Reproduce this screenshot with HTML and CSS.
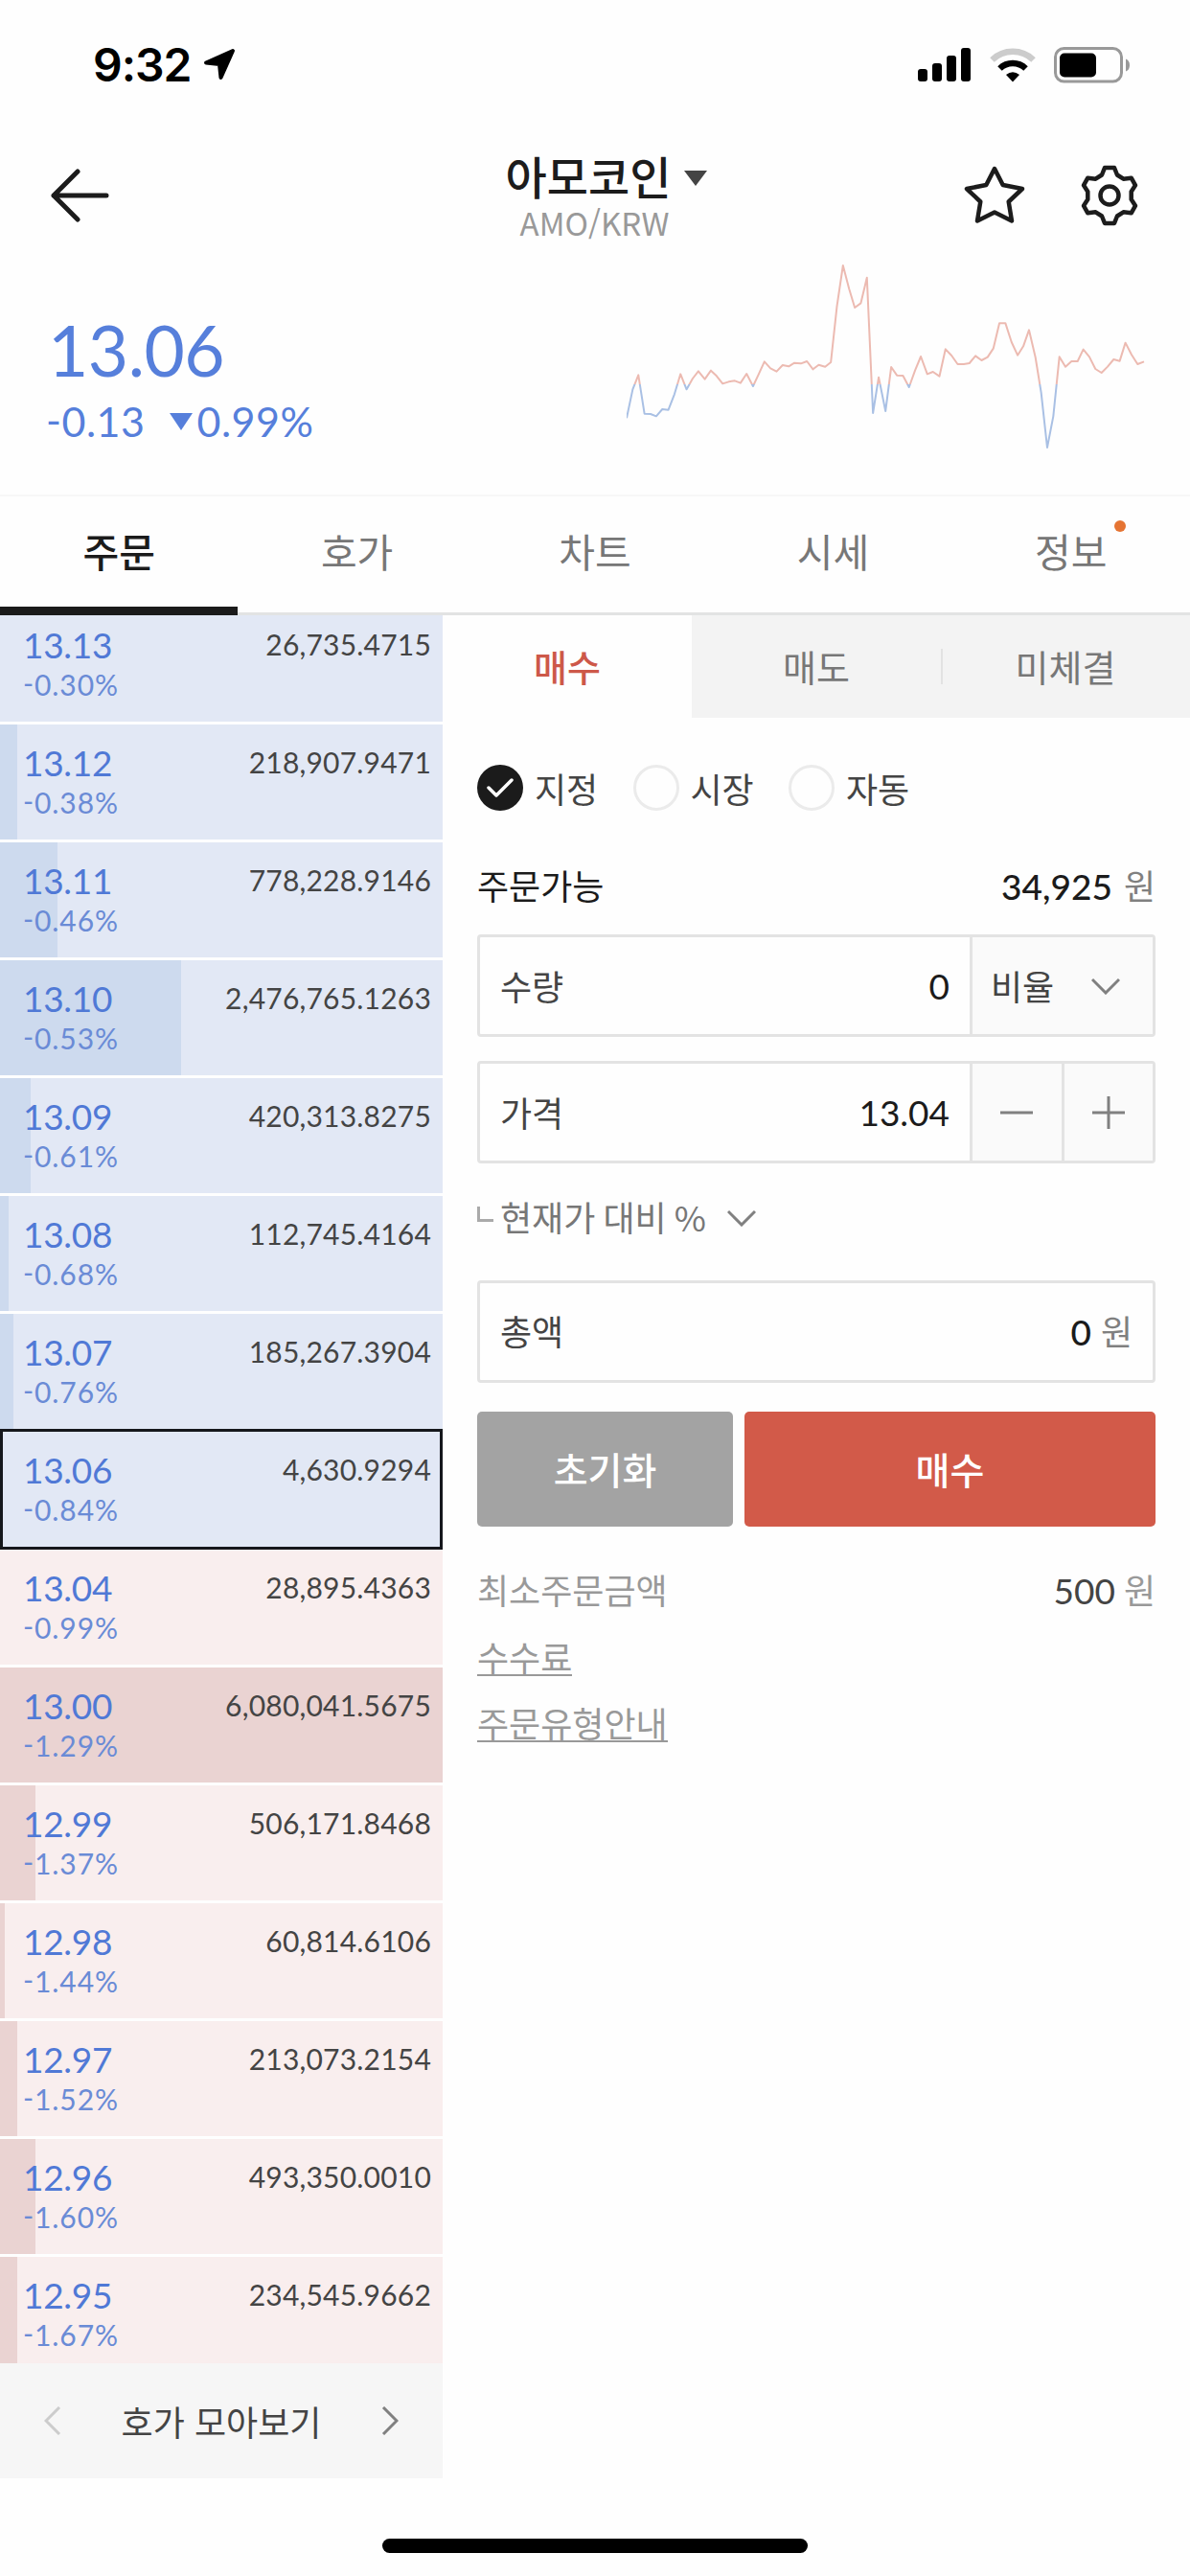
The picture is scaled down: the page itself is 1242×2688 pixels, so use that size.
FILE: index.html
```html
<!DOCTYPE html>
<html lang="ko">
<head>
<meta charset="utf-8">
<title>아모코인 AMO/KRW</title>
<link rel="stylesheet" href="styles.css">
</head>
<body>

<div class="statusbar">
	<span class="time">9:32</span>
	<svg class="location" width="34" height="34" viewBox="0 0 34 34"><path d="M31 3 3 15.500 17 17 18.500 31Z" fill="#000" stroke="#000" stroke-width="4" stroke-linejoin="round"/></svg>
	<svg class="signal" width="56" height="36" viewBox="0 0 56 36">
		<rect x="0" y="22" width="10" height="13" rx="3"/>
		<rect x="15" y="16" width="10" height="19" rx="3"/>
		<rect x="30" y="8" width="10" height="27" rx="3"/>
		<rect x="45" y="0" width="10" height="35" rx="3"/>
	</svg>
	<svg class="wifi" width="48" height="36" viewBox="0 0 48 36" fill="none">
		<path d="M2.500 12.500A31 31 0 0 1 45.500 12.500" stroke="#ccc" stroke-width="6.500"/>
		<path d="M10.500 21.500A19.500 19.500 0 0 1 37.500 21.500" stroke="#000" stroke-width="6.500"/>
		<path d="M24 35.500 17 28Q24 22.500 31 28Z" fill="#000"/>
	</svg>
	<svg class="battery" width="80" height="38" viewBox="0 0 80 38">
		<rect x="1.500" y="1.500" width="69" height="34.500" rx="9" fill="none" stroke="#999" stroke-width="3"/>
		<rect x="6" y="6.500" width="38" height="25" rx="5"/>
		<path d="M75 12.500Q79 14 79 19T75 25.500Z" fill="#999"/>
	</svg>
</div>

<div class="header">
	<svg class="back" width="62" height="56" viewBox="0 0 62 56" fill="none" stroke="#1c1c1c" stroke-width="5" stroke-linecap="round" stroke-linejoin="round"><path d="M58 28H3M28 3 3 28 28 53"/></svg>
	<div class="coin">
		<div class="coin_name">아모코인<span class="caret"></span></div>
		<div class="coin_pair">AMO/KRW</div>
	</div>
	<div class="tools">
		<svg width="64" height="62" viewBox="0 0 64 62" fill="none" stroke="#1c1c1c" stroke-width="4.500" stroke-linejoin="round"><path d="M32 4 40.700 21 61 25 46.700 38.500 50 58.500 32 49.500 14 58.500 17.300 38.500 3 25 23.300 21Z"/></svg>
		<svg width="60" height="64" viewBox="0 0 60 64" fill="none" stroke="#1c1c1c" stroke-width="4.500" stroke-linejoin="round"><path d="M25 3H35L38 10.500 44.500 14.700 52.700 13.700 57 21.300 52.700 28V36L57 42.700 52.700 50.300 44.500 49.300 38 53.500 35 61H25L22 53.500 15.500 49.300 7.300 50.300 3 42.700 7.300 36V28L3 21.300 7.300 13.700 15.500 14.700 22 10.500Z"/><circle cx="30" cy="32" r="9.500"/></svg>
	</div>
</div>

<div class="summary">
	<div class="now">
		<div class="now_price">13.06</div>
		<div class="now_diff">-0.13<span class="down"></span>0.99%</div>
	</div>
	<svg class="spark" width="542" height="200" viewBox="84 820 1368 600" preserveAspectRatio="none" fill="none">
		<defs>
			<linearGradient id="updown" gradientUnits="userSpaceOnUse" x1="0" y1="820" x2="0" y2="1420">
				<stop offset="0.640" stop-color="#ecbab1"/>
				<stop offset="0.640" stop-color="#a9c0e4"/>
			</linearGradient>
		</defs>
		<polyline vector-effect="non-scaling-stroke" stroke="url(#updown)" stroke-width="2" stroke-linejoin="round" points="84,1310 100,1220 115,1175 131,1296 147,1297 162,1304 178,1282 194,1284 210,1235 226,1172 242,1220 258,1186 273,1163 290,1188 306,1161 321,1178 337,1202 353,1196 369,1193 384,1200 400,1171 417,1210 432,1172 447,1133 463,1154 479,1164 495,1144 511,1148 526,1137 543,1139 559,1132 575,1157 590,1143 607,1149 622,1135 638,960 654,832 670,905 685,964 701,950 717,870 733,1294 748,1182 766,1288 781,1150 796,1176 812,1177 828,1213 844,1160 859,1117 876,1172 891,1165 908,1179 924,1094 940,1114 956,1141 972,1141 987,1138 1003,1115 1019,1129 1035,1119 1050,1092 1066,1013 1082,1013 1098,1072 1114,1113 1129,1085 1144,1034 1161,1120 1176,1230 1192,1402 1208,1304 1224,1118 1240,1149 1256,1132 1272,1132 1287,1095 1303,1118 1319,1156 1335,1168 1351,1149 1367,1126 1383,1131 1398,1074 1414,1111 1430,1141 1447,1133"/>
	</svg>
</div>

<div class="tabs">
	<div class="tab on">주문</div>
	<div class="tab">호가</div>
	<div class="tab">차트</div>
	<div class="tab">시세</div>
	<div class="tab">정보<span class="dot"></span></div>
</div>

<div class="content">
	<div class="book">
		<div class="rows">
			<div class="row sell first"><div><div class="price">13.13</div><div class="rate">-0.30%</div></div><div class="amount">26,735.4715</div></div>
			<div class="row sell" style="background-size: 18px 100%"><div><div class="price">13.12</div><div class="rate">-0.38%</div></div><div class="amount">218,907.9471</div></div>
			<div class="row sell" style="background-size: 60px 100%"><div><div class="price">13.11</div><div class="rate">-0.46%</div></div><div class="amount">778,228.9146</div></div>
			<div class="row sell" style="background-size: 189px 100%"><div><div class="price">13.10</div><div class="rate">-0.53%</div></div><div class="amount">2,476,765.1263</div></div>
			<div class="row sell" style="background-size: 32px 100%"><div><div class="price">13.09</div><div class="rate">-0.61%</div></div><div class="amount">420,313.8275</div></div>
			<div class="row sell" style="background-size: 9px 100%"><div><div class="price">13.08</div><div class="rate">-0.68%</div></div><div class="amount">112,745.4164</div></div>
			<div class="row sell" style="background-size: 14px 100%"><div><div class="price">13.07</div><div class="rate">-0.76%</div></div><div class="amount">185,267.3904</div></div>
			<div class="row sell current"><div><div class="price">13.06</div><div class="rate">-0.84%</div></div><div class="amount">4,630.9294</div></div>
			<div class="row buy"><div><div class="price">13.04</div><div class="rate">-0.99%</div></div><div class="amount">28,895.4363</div></div>
			<div class="row buy" style="background-size: 100% 100%"><div><div class="price">13.00</div><div class="rate">-1.29%</div></div><div class="amount">6,080,041.5675</div></div>
			<div class="row buy" style="background-size: 37px 100%"><div><div class="price">12.99</div><div class="rate">-1.37%</div></div><div class="amount">506,171.8468</div></div>
			<div class="row buy" style="background-size: 5px 100%"><div><div class="price">12.98</div><div class="rate">-1.44%</div></div><div class="amount">60,814.6106</div></div>
			<div class="row buy" style="background-size: 18px 100%"><div><div class="price">12.97</div><div class="rate">-1.52%</div></div><div class="amount">213,073.2154</div></div>
			<div class="row buy" style="background-size: 37px 100%"><div><div class="price">12.96</div><div class="rate">-1.60%</div></div><div class="amount">493,350.0010</div></div>
			<div class="row buy last" style="background-size: 18px 100%"><div><div class="price">12.95</div><div class="rate">-1.67%</div></div><div class="amount">234,545.9662</div></div>
		</div>
		<div class="group">
			<svg width="18" height="30" viewBox="0 0 18 30" fill="none" stroke="#ccc" stroke-width="3"><path d="M16 1 2 15 16 29"/></svg>
			<span>호가 모아보기</span>
			<svg width="18" height="30" viewBox="0 0 18 30" fill="none" stroke="#808080" stroke-width="3"><path d="M2 1 16 15 2 29"/></svg>
		</div>
	</div>

	<div class="order">
		<div class="sides">
			<div class="side on">매수</div>
			<div class="side">매도</div>
			<div class="side line">미체결</div>
		</div>
		<div class="form">
			<div class="types">
				<div class="type"><span class="radio checked"><svg width="28" height="22" viewBox="0 0 28 22" fill="none" stroke="#fff" stroke-width="3.500" stroke-linecap="round" stroke-linejoin="round"><path d="M2 11 10 19 26 3"/></svg></span>지정</div>
				<div class="type"><span class="radio"></span>시장</div>
				<div class="type"><span class="radio"></span>자동</div>
			</div>
			<div class="avail"><span>주문가능</span><span><b>34,925</b><i>원</i></span></div>
			<div class="field qty">
				<div class="input"><span>수량</span><em>0</em></div>
				<div class="ratio">비율<svg width="30" height="18" viewBox="0 0 30 18" fill="none" stroke="#808080" stroke-width="3"><path d="M1 2 15 16 29 2"/></svg></div>
			</div>
			<div class="field cost">
				<div class="input"><span>가격</span><em>13.04</em></div>
				<div class="step"><svg width="34" height="34" viewBox="0 0 34 34" stroke="#808080" stroke-width="3"><path d="M0 17H34"/></svg></div>
				<div class="step"><svg width="34" height="34" viewBox="0 0 34 34" stroke="#808080" stroke-width="3"><path d="M0 17H34M17 0V34"/></svg></div>
			</div>
			<div class="compare"><span class="corner"></span>현재가 대비 %<svg width="30" height="18" viewBox="0 0 30 18" fill="none" stroke="#808080" stroke-width="3"><path d="M1 2 15 16 29 2"/></svg></div>
			<div class="field total">
				<div class="input"><span>총액</span><span><b>0</b><i>원</i></span></div>
			</div>
			<div class="buttons">
				<div class="button reset">초기화</div>
				<div class="button submit">매수</div>
			</div>
			<div class="minimum"><span>최소주문금액</span><span><em>500</em><i>원</i></span></div>
			<div class="link"><span>수수료</span></div>
			<div class="link"><span>주문유형안내</span></div>
		</div>
	</div>
</div>

<div class="home"></div>

</body>
</html>
```
FILE: styles.css
```css
* {
	box-sizing: border-box;
}
body {
	width: 1242px;
	height: 2688px;
	margin: 0;
	overflow: hidden;
	background: #fefefe;
	color: #444;
	font-family: "Noto Sans CJK KR", sans-serif;
	font-size: 36px;
}
svg {
	display: block;
	flex: none;
}
b, em, i {
	font-style: normal;
	font-weight: 400;
}

/* status bar */
.statusbar {
	display: flex;
	align-items: flex-start;
	height: 132px;
	padding: 49px 62px 0 97px;
}
.time {
	width: 115px;
	font: 600 48px/37px Inter, sans-serif;
	letter-spacing: -1px;
	color: #000;
}
.location {
	margin-top: 1px;
}
.signal {
	margin: 1px 19px 0 auto;
}
.wifi {
	margin: 1px 19px 0 0;
}

/* header */
.header {
	display: grid;
	grid-template-columns: 1fr auto 1fr;
	height: 140px;
	padding: 0 54px 0 53px;
}
.back {
	margin-top: 44px;
}
.coin {
	text-align: center;
}
.coin_name {
	display: flex;
	align-items: center;
	justify-content: center;
	height: 68px;
	margin: 17px 0 0 25px;
	color: #1c1c1c;
	font-size: 47px;
	font-weight: 500;
	line-height: 68px;
}
.caret {
	margin: 5px 0 0 14px;
	border: 12px solid transparent;
	border-top: 16px solid #444;
	border-bottom: 0;
}
.coin_pair {
	margin-top: -2px;
	color: #999;
	font-size: 33px;
	line-height: 34px;
}
.tools {
	display: flex;
	justify-content: flex-end;
	gap: 58px;
	padding-top: 40px;
}

/* price summary */
.summary {
	display: flex;
	justify-content: space-between;
	height: 244px;
	padding: 1px 46px 0 48px;
	color: #567fdb;
	font-family: Lato, sans-serif;
}
.now_price {
	margin: 48px 0 0 2px;
	font-size: 73px;
	letter-spacing: -0.5px;
	line-height: 88px;
}
.now_diff {
	display: flex;
	align-items: center;
	font-size: 43px;
	font-feature-settings: "case";
	letter-spacing: 0.5px;
	line-height: 62px;
}
.down {
	margin: 0 4px 0 26px;
	border: 12px solid transparent;
	border-top: 18px solid #567fdb;
	border-bottom: 0;
}

/* main tabs */
.tabs {
	display: flex;
	height: 126px;
	border-top: 2px solid #f7f7f7;
	border-bottom: 3px solid #e2e3e3;
}
.tab {
	flex: 1;
	position: relative;
	height: 124px;
	color: #777;
	font-size: 41px;
	line-height: 112px;
	text-align: center;
}
.tab.on {
	border-bottom: 9px solid #1b1b1b;
	color: #1b1b1b;
	font-weight: 500;
}
.dot {
	position: absolute;
	top: 25px;
	right: 67px;
	width: 12px;
	height: 12px;
	border-radius: 50%;
	background: #e57433;
}

.content {
	display: grid;
	grid-template-columns: 462px 1fr;
}

/* order book */
.rows {
	display: flex;
	flex-direction: column;
	gap: 3px;
}
.row {
	display: flex;
	justify-content: space-between;
	height: 120px;
	padding: 15px 12px 0 24px;
	background-repeat: no-repeat;
	background-size: 0 100%;
	font-family: Lato, sans-serif;
	font-size: 30px;
}
.row.sell {
	background-color: #e2e8f5;
	background-image: linear-gradient(#cddaee, #cddaee);
}
.row.buy {
	background-color: #f9eeee;
	background-image: linear-gradient(#ead3d2, #ead3d2);
}
.row.first {
	height: 111px;
	padding-top: 6px;
}
.row.last {
	height: 111px;
}
.row.current {
	height: 126px;
	margin: -3px 0;
	padding: 15px 9px 0 21px;
	border: 3px solid #15171c;
}
.price {
	color: #5079d6;
	font-size: 37px;
	letter-spacing: -0.3px;
	line-height: 50px;
}
.rate {
	color: #6a8bd6;
	font-feature-settings: "case";
	font-size: 30px;
	letter-spacing: 0.9px;
	line-height: 33px;
}
.amount {
	color: #444;
	letter-spacing: 0.2px;
	line-height: 49px;
}
.group {
	display: flex;
	align-items: center;
	justify-content: space-between;
	height: 120px;
	padding: 0 46px;
	background: #f6f6f6;
}

/* order form */
.sides {
	display: flex;
	height: 107px;
	background: #f3f3f3;
	color: #777;
	font-size: 38px;
	line-height: 105px;
	text-align: center;
}
.side {
	flex: 1;
}
.side.on {
	background: #fefefe;
	color: #cd5849;
	font-weight: 500;
}
.side.line {
	background: linear-gradient(#e2e2e2, #e2e2e2) 0 35px / 2px 37px no-repeat;
}
.form {
	padding: 49px 36px 0;
}
.types {
	display: flex;
	height: 48px;
}
.type {
	display: flex;
	align-items: center;
	width: 162.500px;
	line-height: 48px;
}
.radio {
	display: flex;
	align-items: center;
	justify-content: center;
	width: 48px;
	height: 48px;
	margin-right: 12px;
	border: 3px solid #ebebeb;
	border-radius: 50%;
}
.radio.checked {
	border: 0;
	background: #1b1b1b;
}
.avail, .minimum {
	display: flex;
	justify-content: space-between;
	height: 60px;
	line-height: 60px;
}
.avail {
	margin: 47px 0 22px;
	color: #1b1b1b;
}
b, em {
	color: #1b1b1b;
	font-family: Lato, sans-serif;
	font-size: 37px;
}
b {
	font-weight: 500;
}
i {
	margin-left: 12px;
	color: #808080;
}
.field {
	display: flex;
	height: 107px;
	border: 3px solid #e3e3e3;
	border-radius: 4px;
	line-height: 101px;
}
.input {
	display: flex;
	flex: 1;
	justify-content: space-between;
	padding: 0 21px;
}
.ratio {
	display: flex;
	align-items: center;
	justify-content: space-between;
	width: 191px;
	padding: 0 34px 0 19px;
	border-left: 3px solid #e3e3e3;
	background: #fafafa;
}
.cost {
	margin-top: 25px;
}
.step {
	display: flex;
	align-items: center;
	justify-content: center;
	width: 95.500px;
	border-left: 3px solid #e3e3e3;
	background: #fafafa;
}
.compare {
	display: flex;
	align-items: center;
	height: 60px;
	margin: 25px 0 37px;
	color: #777;
	line-height: 60px;
	word-spacing: -2px;
}
.compare svg {
	margin: 4px 0 0 22px;
}
.corner {
	width: 17px;
	height: 16px;
	margin: -4px 7px 0 0;
	border: solid #aaa;
	border-width: 0 0 3px 3px;
}
.total {
	line-height: 99px;
}
.total i {
	margin-left: 10px;
}
.buttons {
	display: flex;
	gap: 12px;
	margin: 30px 0 35px;
}
.button {
	width: 267px;
	height: 120px;
	border-radius: 5px;
	background: #a3a3a3;
	color: #fff;
	font-size: 39px;
	font-weight: 500;
	line-height: 118px;
	text-align: center;
}
.submit {
	flex: 1;
	background: #d25a49;
}
.minimum {
	color: #999;
}
.minimum em {
	color: #444;
}
.minimum i {
	margin-left: 9px;
	color: #999;
}
.link {
	height: 69px;
	color: #999;
	line-height: 36px;
	padding-top: 22px;
}
.link span {
	display: inline-block;
	height: 38px;
	border-bottom: 2px solid #999;
	line-height: 34px;
}

.home {
	width: 444px;
	height: 15px;
	margin: 63px auto 0;
	border-radius: 8px;
	background: #000;
}
```
